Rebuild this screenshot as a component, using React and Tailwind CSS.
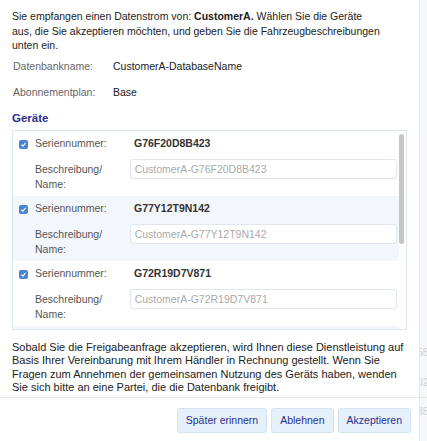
import React from "react";

const devices = [
  { serial: "G76F20D8B423", shade: false },
  { serial: "G77Y12T9N142", shade: true },
  { serial: "G72R19D7V871", shade: false },
];

function Check() {
  return (
    <span className="flex h-[9px] w-[9px] shrink-0 items-center justify-center rounded-[2px] bg-[#4a84d4]">
      <svg viewBox="0 0 10 10" className="h-[7px] w-[7px]">
        <path d="M2 5.2 L4.2 7.3 L8 2.8" fill="none" stroke="#fff" strokeWidth="1.6" />
      </svg>
    </span>
  );
}

function DeviceRow({ serial, shade }) {
  return (
    <div className={`flex flex-col pl-[6px] pr-[2px] pt-[6px] pb-[4px] ${shade ? "bg-[#f3f7fc]" : "bg-white"}`}>
      <div className="flex h-[15px] items-center">
        <Check />
        <span className="ml-[7px] w-[99px] text-[#555]">Seriennummer:</span>
        <span className="font-bold text-[#333]">{serial}</span>
      </div>
      <div className="mt-[7px] flex">
        <div className="w-[112px] pl-[16px] pt-[3px] leading-[15px] text-[#555]">
          Beschreibung/
          <br />
          Name:
        </div>
        <input
          readOnly
          placeholder={`CustomerA-${serial}`}
          className="h-[20px] w-[271px] rounded-[3px] border border-[#dfe6ee] bg-white px-[4px] text-[10.5px] text-[#333] outline-none placeholder:text-[#a9a9a9]"
        />
      </div>
    </div>
  );
}

export default function App() {
  return (
    <div
      className="flex h-[441px] w-[427px] overflow-hidden bg-[#f5f7fa] text-[10.5px] text-[#222]"
      style={{ fontFamily: '"Liberation Sans", Arial, sans-serif' }}
    >
      {/* Dialog */}
      <div className="flex w-[420px] shrink-0 flex-col border-r border-[#e2eaf3] bg-white">
        <div className="pl-[12px] pr-[19px] pt-[9px]">
          <p className="leading-[14.5px]">
            Sie empfangen einen Datenstrom von: <span className="font-bold">CustomerA.</span> Wählen Sie die Geräte
            <br />
            aus, die Sie akzeptieren möchten, und geben Sie die Fahrzeugbeschreibungen unten ein.
          </p>

          <div className="mt-[1px] flex h-[26px] items-center pl-[1px]">
            <span className="w-[100px] text-[#666]">Datenbankname:</span>
            <span>CustomerA-DatabaseName</span>
          </div>
          <div className="flex h-[26px] items-center pl-[1px]">
            <span className="w-[100px] text-[#666]">Abonnementplan:</span>
            <span>Base</span>
          </div>

          <h3 className="mt-[5px] text-[11.5px] leading-[14px] font-bold text-[#2b2f8c]">Geräte</h3>
        </div>

        {/* Device list */}
        <div className="mx-[12px] mt-[5px] flex h-[200px] border border-[#dde6f0]">
          <div className="flex flex-1 flex-col overflow-hidden">
            {devices.map((d) => (
              <DeviceRow key={d.serial} {...d} />
            ))}
            <div className="flex bg-[#f3f7fc] pl-[6px] pt-[6px]">
              <Check />
            </div>
          </div>
          <div className="w-[7px] shrink-0 pt-[3px]">
            <div className="h-[110px] w-[5px] rounded-full bg-[#c6c6c6]" />
          </div>
        </div>

        <p className="mt-[11px] px-[12px] text-[11px] leading-[13.5px]">
          Sobald Sie die Freigabeanfrage akzeptieren, wird Ihnen diese Dienstleistung auf Basis Ihrer Vereinbarung mit
          Ihrem Händler in Rechnung gestellt. Wenn Sie Fragen zum Annehmen der gemeinsamen Nutzung des Geräts haben,
          wenden Sie sich bitte an eine Partei, die die Datenbank freigibt.
        </p>

        {/* Footer */}
        <div className="mt-auto flex justify-end gap-[4px] border-t border-[#e4e8ee] px-[8px] pt-[10px] pb-[8px]">
          <button className="h-[25px] rounded-[3px] border border-[#d3e2f2] bg-[#e5f0fb] px-[8px] text-[10.5px] text-[#2b2f8c]">
            Später erinnern
          </button>
          <button className="h-[25px] rounded-[3px] border border-[#d3e2f2] bg-[#e5f0fb] px-[8px] text-[10.5px] text-[#2b2f8c]">
            Ablehnen
          </button>
          <button className="h-[25px] rounded-[3px] border border-[#d3e2f2] bg-[#e5f0fb] px-[8px] text-[10.5px] text-[#2b2f8c]">
            Akzeptieren
          </button>
        </div>
      </div>

      {/* Background page peeking out */}
      <div className="flex flex-1 flex-col overflow-hidden text-[#ccd0d6]">
        <div className="h-[345px]" />
        <span className="-ml-[3px] leading-[14px]">55</span>
        <span className="-ml-[3px] mt-[16px] leading-[14px]">02</span>
        <div className="mt-[8px] border-t border-[#e4e8ee]" />
        <span className="-ml-[3px] mt-[6px] leading-[14px]">35</span>
      </div>
    </div>
  );
}
